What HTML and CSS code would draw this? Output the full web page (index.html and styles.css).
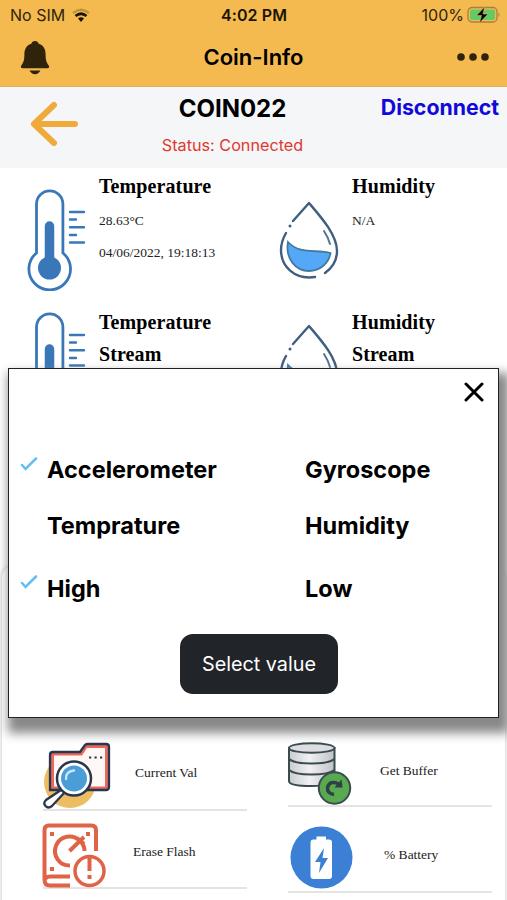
FILE: index.html
```
<!DOCTYPE html>
<html lang="en">
<head>
  <meta charset="UTF-8">
  <meta name="viewport" content="width=device-width, initial-scale=1.0">
  <title>Coin-Info</title>
  <link rel="stylesheet" href="styles.css">
</head>
<body>
  <!-- shared shapes for the sensor cards -->
  <svg width="0" height="0" class="defs">
    <symbol id="thermometer" viewBox="0 0 60 104">
      <path d="M9.500 66V17a13.200 13.200 0 0 1 26.400 0V66A20.800 20.800 0 1 1 9.500 66Z" fill="none" stroke="#3a77b9" stroke-width="2.800"/>
      <path d="M22.500 80V39" stroke="#3a77b9" stroke-width="9.500" stroke-linecap="round"/>
      <circle cx="22.500" cy="81" r="11.500" fill="#3a77b9"/>
      <path d="M43 25h14M43 32.500h6M43 40.200h14M43 48h6M43 55.500h14" stroke="#3a77b9" stroke-width="2.400" stroke-linecap="round"/>
    </symbol>
    <symbol id="drop" viewBox="0 0 62 80">
      <g fill="none" stroke="#3f5f80" stroke-width="2.400" stroke-linecap="round" stroke-linejoin="round">
        <path d="M15 21L31 3C43 17 59 35 59 51C59 61 54 68 47 73"/>
        <path d="M8 33C4 40 3 45 3 50C3 66 16 80 37 77"/>
        <path d="M46 31Q50 37 52 44" stroke="#55738f" stroke-width="2"/>
        <path d="M12 26v0" stroke-width="3"/>
      </g>
      <path d="M10 42C22 55 38 49 52.500 53C51 63 42 71 31 71C18 71 7 59 10 42Z" fill="#55a8f8" stroke="#427a9e" stroke-width="1.800"/>
    </symbol>
  </svg>

  <header class="topbar">
    <div class="status">
      <div class="carrier">No SIM
        <svg width="20" height="15" viewBox="0 0 20 15" fill="none">
          <path d="M2 5Q10-1.500 18 5" stroke="#c1913c" stroke-width="2.500"/>
          <path d="M4.500 8Q10 3.500 15.500 8" stroke="#1b1405" stroke-width="2.700"/>
          <path d="M7 10.500Q10 8.200 13 10.500L10 14Z" fill="#1b1405"/>
        </svg>
      </div>
      <div class="clock">4:02 PM</div>
      <div class="power">100%
        <svg width="34" height="18" viewBox="0 0 34 18">
          <rect x="1" y="1.500" width="29" height="14.500" rx="4" fill="none" stroke="#a88140" stroke-width="1.300"/>
          <rect x="3" y="3.500" width="25" height="10.500" rx="2" fill="#63ca68"/>
          <path d="M31.500 6.500q2 2.200 0 4.500z" fill="#a88140"/>
          <path d="M17.500 1L9.500 9.500h5L12.500 17L21 8h-5z" fill="#080804" stroke="#f4ba4f" stroke-width=".5"/>
        </svg>
      </div>
    </div>
    <div class="nav">
      <svg width="30" height="35" viewBox="0 0 30 35" fill="#30230b">
        <path d="M15 1c-2 0-3.200 1-3.400 2.600C7 5 4.500 9 4.400 14c0 6-.8 8.300-3 11.200C.3 27 1 28.300 2.600 28.300h24.800c1.600 0 2.300-1.300 1.200-3.100-2.200-2.900-3-5.200-3-11.200C25.500 9 23 5 18.400 3.600 18.200 2 17 1 15 1Z"/>
        <path d="M9.500 30.500h11q-2 3.700-5.500 3.700t-5.500-3.700Z"/>
      </svg>
      <h1>Coin-Info</h1>
      <svg width="32" height="8" viewBox="0 0 32 8" fill="#30230b">
        <circle cx="4" cy="4" r="3.800"/><circle cx="16" cy="4" r="3.800"/><circle cx="28" cy="4" r="3.800"/>
      </svg>
    </div>
  </header>

  <section class="device">
    <svg class="back" width="50" height="46" viewBox="0 0 50 46">
      <path d="M24 4L4 23L24 42M4 23H45" fill="none" stroke="#f0aa3c" stroke-width="6" stroke-linecap="round" stroke-linejoin="round"/>
    </svg>
    <div class="device-name">
      <h2>COIN022</h2>
      <p>Status: Connected</p>
    </div>
    <a class="disconnect">Disconnect</a>
  </section>

  <main>
    <section class="sensors">
      <div class="sensor">
        <svg class="thermo"><use href="#thermometer"/></svg>
        <div>
          <h3>Temperature</h3>
          <p>28.63°C</p>
          <p>04/06/2022, 19:18:13</p>
        </div>
      </div>
      <div class="sensor">
        <svg class="humid"><use href="#drop"/></svg>
        <div>
          <h3>Humidity</h3>
          <p>N/A</p>
        </div>
      </div>
      <div class="sensor">
        <svg class="thermo"><use href="#thermometer"/></svg>
        <h3>Temperature<br>Stream</h3>
      </div>
      <div class="sensor">
        <svg class="humid"><use href="#drop"/></svg>
        <h3>Humidity<br>Stream</h3>
      </div>
    </section>

    <section class="actions">
      <div class="column">
        <div class="action current">
          <svg width="68" height="67" viewBox="0 0 68 67">
            <circle cx="27" cy="40" r="26" fill="#edbd62"/>
            <path d="M7 48V13q0-3 3-3H37L42 3q1-1 3-1H63q3 0 3 3V45q0 3-3 3Z" fill="#e9695b" stroke="#28364f" stroke-width="2.300"/>
            <path d="M11 44.500V13.500H39L44 6H62V44.500Z" fill="#fff8f5"/>
            <path d="M46 15.500h2.200M51.500 15.500h2.200M57 15.500h2.200" stroke="#28364f" stroke-width="2.200"/>
            <path d="M19.500 47L3 58Q-.2 61 2.500 64T9 64L22 50Z" fill="#fff" stroke="#28364f" stroke-width="2.300"/>
            <circle cx="31" cy="36.500" r="17" fill="#fff" stroke="#28364f" stroke-width="2.500"/>
            <circle cx="31" cy="36.500" r="13" fill="#4b9dd8"/>
            <path d="M23 37Q22.500 29.500 31 28.500" fill="none" stroke="#c9e6f8" stroke-width="2.300" stroke-linecap="round"/>
          </svg>
          <span>Current Val</span>
        </div>
        <div class="action erase">
          <svg width="64" height="65" viewBox="0 0 64 65" fill="none" stroke="#e06347" stroke-width="4">
            <path d="M54 28V7q0-4.500-4.500-4.500H7Q2.500 2.500 2.500 7V57Q2.500 62.500 8 62.500H28M2.500 58Q3 53.500 8 53.500H28"/>
            <path d="M28 42.500A14.500 14.500 0 1 1 38 18Q42.500 22 42.500 28M27.500 28L42 14M35 15L42 21"/>
            <path d="M8 11h4M44 11h4M8 46h4"/>
            <circle cx="47.500" cy="48" r="14.500" stroke-width="3.500"/>
            <path d="M47.500 35V48M47.500 52v4"/>
          </svg>
          <span>Erase Flash</span>
        </div>
      </div>
      <div class="column">
        <div class="action buffer">
          <svg width="64" height="63" viewBox="0 0 64 63">
            <defs>
              <linearGradient id="steel"><stop stop-color="#c9cdcf"/><stop offset=".45" stop-color="#f1f0f4"/><stop offset="1" stop-color="#bfc2c5"/></linearGradient>
            </defs>
            <path d="M1 6V39Q1 44 23.500 44T46.500 39V6Z" fill="url(#steel)" stroke="#3b4b50" stroke-width="2"/>
            <path d="M1 17Q6 21.500 23.500 21.500T46.500 17M1 28Q6 32.500 23.500 32.500T46.500 28" fill="none" stroke="#3b4b50" stroke-width="2"/>
            <ellipse cx="23.700" cy="6" rx="22.800" ry="4.800" fill="#dcdee1" stroke="#3b4b50" stroke-width="2"/>
            <circle cx="46.500" cy="46" r="15.700" fill="#58a950" stroke="#3b4b50" stroke-width="2"/>
            <path d="M46 52.500Q39 51.500 39.500 45.500Q42 37.500 51 42" fill="none" stroke="#2e4046" stroke-width="3.500"/>
            <path d="M53.500 37.500L54.500 45.500L46.500 45.500Z" fill="#2e4046"/>
          </svg>
          <span>Get Buffer</span>
        </div>
        <div class="action battery">
          <svg width="63" height="63" viewBox="0 0 63 63">
            <circle cx="31.500" cy="31.500" r="31" fill="#3b80d5"/>
            <path d="M26.500 13.500V10.500h9.500V13.500H39q3 0 3 3V50q0 3-3 3H23.500q-3 0-3-3V16.500q0-3 3-3Z" fill="#fff"/>
            <path d="M34 22L25 36h5.500L29 47L38 32H32.500Z" fill="#3b80d5"/>
          </svg>
          <span>% Battery</span>
        </div>
      </div>
    </section>
  </main>

  <div class="modal">
    <svg class="close" width="20" height="20" viewBox="0 0 20 20">
      <path d="M2 2L18 18M18 2L2 18" stroke="#000" stroke-width="3" stroke-linecap="round"/>
    </svg>
    <div class="options">
      <div class="option checked">
        <svg width="18" height="14" viewBox="0 0 18 14"><path d="M2 8L5.500 12L16 1.500"/></svg>
        Accelerometer
      </div>
      <div class="option">Gyroscope</div>
      <div class="option">Temprature</div>
      <div class="option">Humidity</div>
      <div class="option checked">
        <svg width="18" height="14" viewBox="0 0 18 14"><path d="M2 8L5.500 12L16 1.500"/></svg>
        High
      </div>
      <div class="option">Low</div>
    </div>
    <button>Select value</button>
  </div>
</body>
</html>
```
FILE: styles.css
```
* {
  box-sizing: border-box;
}
body {
  margin: 0;
  height: 900px;
  position: relative;
  overflow: hidden;
  background: #fff;
  font-family: Inter, "Liberation Sans", sans-serif;
}
h1, h2, h3, p {
  margin: 0;
}
svg {
  display: block;
  flex-shrink: 0;
}
.defs {
  position: absolute;
}

/* top bar */
.topbar {
  height: 87px;
  background: #f4ba4f;
  border-bottom: 1px solid #dfb25e;
}
.status {
  display: grid;
  grid-template-columns: 1fr auto 1fr;
  align-items: center;
  height: 30px;
  padding: 0 6px 0 10px;
  font-size: 16px;
  color: #30240d;
}
.carrier, .power {
  display: flex;
  align-items: center;
  gap: 6px;
}
.power {
  justify-content: flex-end;
  gap: 3px;
}
.clock {
  margin-right: 3px;
  font-weight: 600;
  letter-spacing: .1px;
  color: #1b1405;
}
.nav {
  display: flex;
  align-items: center;
  justify-content: space-between;
  height: 54px;
  padding: 0 18px 0 20px;
}
.nav h1 {
  font-size: 22px;
  font-weight: 600;
}

/* device header */
.device {
  display: grid;
  grid-template-columns: 133px 1fr 133px;
  height: 81px;
  padding: 0 8px;
  background: #f4f6f8;
}
.back {
  margin: 14px 0 0 22px;
}
.device-name {
  padding-top: 7px;
  margin-right: 42px;
  white-space: nowrap;
  text-align: center;
}
.device-name h2 {
  font-size: 24px;
  line-height: 30px;
  font-weight: 700;
}
.device-name p {
  margin-top: 11px;
  font-size: 16.200px;
  line-height: 20px;
  color: #e0382f;
}
.disconnect {
  padding-top: 7px;
  text-align: right;
  font-size: 21.300px;
  line-height: 26px;
  font-weight: 700;
  color: #1109dc;
}

/* sensors */
.sensors {
  display: grid;
  grid-template-columns: 253px 1fr;
  grid-template-rows: 136px 261px;
  font-family: "Liberation Serif", serif;
}
.sensor {
  display: flex;
  align-items: flex-start;
}
.sensor h3 {
  font-size: 20px;
  line-height: 32px;
  margin-top: 2px;
  letter-spacing: .1px;
}
.sensor p {
  margin-top: 4px;
  margin-bottom: 16px;
  font-size: 13.500px;
  line-height: 16px;
  color: #222;
}
.sensor h3 + p {
  margin-top: 11px;
}
.thermo {
  width: 60px;
  height: 104px;
  margin: 19px 12px 0 27px;
}
.humid {
  width: 62px;
  height: 80px;
  margin: 32px 12px 0 25px;
}
.sensor:nth-child(n+3) .thermo {
  margin-top: 6px;
}
.sensor:nth-child(n+3) .humid {
  margin-top: 19px;
}

/* actions card */
.actions {
  display: grid;
  grid-template-columns: 204px 204px;
  column-gap: 41px;
  height: 360px;
  padding: 177px 0 0 41px;
  margin: 0 1px;
  border: 1px solid #e2e2e2;
  border-radius: 12px;
  box-shadow: 0 0 3px #ccc;
  font-family: "Liberation Serif", serif;
  font-size: 13.500px;
  color: #222;
}
.action {
  display: flex;
  align-items: flex-start;
  border-bottom: 2px solid #e4e4e4;
}
.action svg {
  position: relative;
  top: -1px;
}
.current {
  height: 68px;
}
.erase {
  height: 78px;
  padding-top: 13px;
}
.erase svg {
  left: -1px;
}
.buffer {
  height: 64px;
}
.battery {
  height: 86px;
  padding: 20px 0 0 2px;
}
.current span {
  margin: 22px 0 0 24px;
}
.erase span {
  margin: 20px 0 0 26px;
}
.buffer span {
  margin: 20px 0 0 28px;
}
.battery span {
  margin: 20px 0 0 31px;
}

/* modal */
.modal {
  position: absolute;
  top: 368px;
  left: 8px;
  width: 491px;
  height: 350px;
  background: #fff;
  border: 1px solid #222;
  box-shadow: 5px 10px 10px 5px #888;
}
.close {
  margin: 13px 14px 0 auto;
}
.options {
  display: grid;
  grid-template-columns: 258px 1fr;
  grid-template-rows: 56px 59px 60px;
  margin: 54px 0 0 38px;
  font-size: 23.500px;
  line-height: 28px;
  font-weight: 700;
}
.option {
  position: relative;
}
.option svg {
  position: absolute;
  left: -27px;
  top: 1px;
  fill: none;
  stroke: #64bdf4;
  stroke-width: 2.500;
  stroke-linecap: round;
}
.option:nth-child(n+5) {
  padding-top: 4px;
}
.option:nth-child(n+5) svg {
  top: 4px;
}
button {
  display: block;
  width: 158px;
  height: 60px;
  margin: 3px 0 0 171px;
  padding: 0;
  border: none;
  border-radius: 13px;
  background: #212429;
  color: #fff;
  font-family: inherit;
  font-size: 19.800px;
}
```
